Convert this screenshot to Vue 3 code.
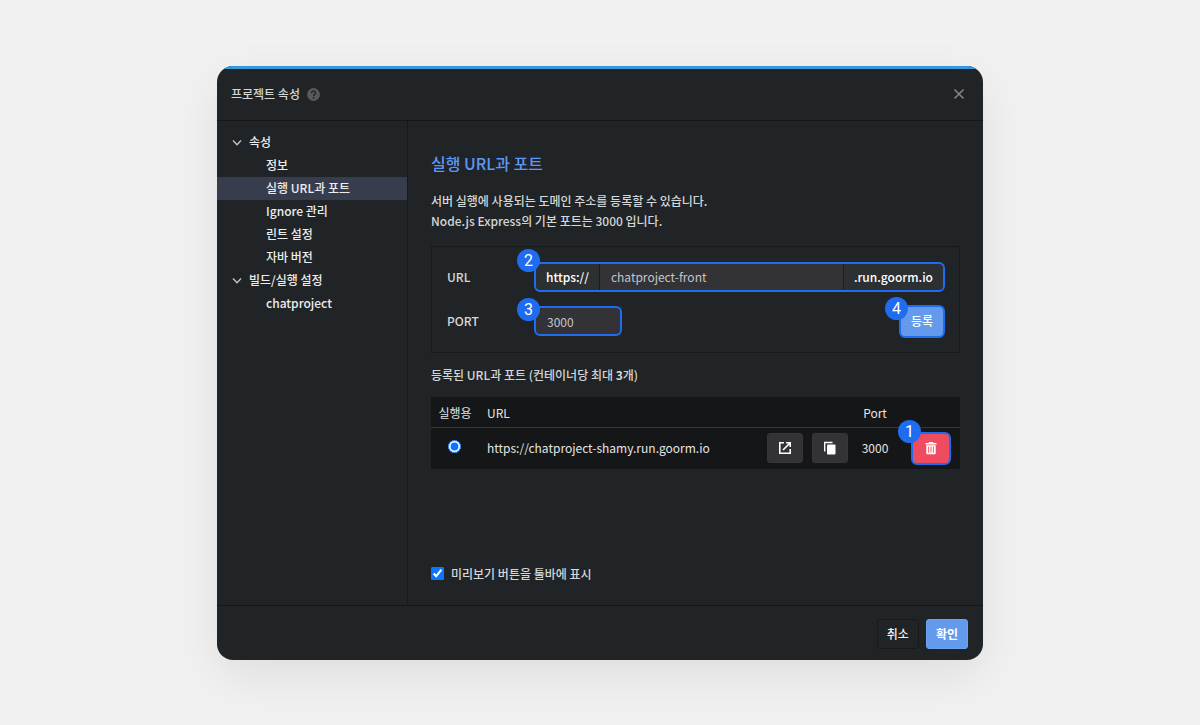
<script setup>
import { ref } from 'vue'

const groups = [
  { name: '속성', items: ['정보', '실행 URL과 포트', 'Ignore 관리', '린트 설정', '자바 버전'] },
  { name: '빌드/실행 설정', items: ['chatproject'] },
]
const selected = ref('실행 URL과 포트')
const host = ref('chatproject-front')
const port = ref('3000')
const showPreview = ref(true)
const runTarget = ref(0)
const entries = [{ url: 'https://chatproject-shamy.run.goorm.io', port: '3000' }]
</script>

<template>
  <main class="page">
    <section class="dialog" role="dialog" aria-labelledby="dialog-title">
      <header class="head">
        <h1 id="dialog-title">프로젝트 속성</h1>
        <button class="plain help" type="button" aria-label="도움말">
          <svg width="13" height="13" viewBox="0 0 13 13">
            <circle cx="6.500" cy="6.500" r="6.400" fill="#58595b" />
            <path d="M4.500 5.100C4.500 2.500 8.600 2.500 8.600 4.900C8.600 6.300 6.600 6.400 6.600 8" fill="none" stroke="#212426" stroke-width="1.400" />
            <rect x="5.850" y="9" width="1.500" height="1.500" fill="#212426" />
          </svg>
        </button>
        <button class="plain close" type="button" aria-label="닫기">
          <svg width="12" height="12" viewBox="0 0 12 12">
            <path d="M1.500 1.500L10.500 10.500M10.500 1.500L1.500 10.500" fill="none" stroke="#85888b" stroke-width="1.500" />
          </svg>
        </button>
      </header>

      <div class="body">
        <nav class="side">
          <div v-for="g in groups" :key="g.name">
            <button class="plain group" type="button" aria-expanded="true">
              <svg width="10" height="10" viewBox="0 0 10 10">
                <path d="M1 3.500L5 7.700L9 3.500" fill="none" stroke="#c6c8ca" stroke-width="1.300" />
              </svg>
              {{ g.name }}
            </button>
            <button
              v-for="i in g.items"
              :key="i"
              class="plain item"
              :class="{ active: i === selected }"
              type="button"
              @click="selected = i"
            >{{ i }}</button>
          </div>
        </nav>

        <div class="content">
          <h2>실행 URL과 포트</h2>
          <p class="intro">서버 실행에 사용되는 도메인 주소를 등록할 수 있습니다.<br />Node.js Express의 기본 포트는 3000 입니다.</p>

          <form class="panel" @submit.prevent>
            <div class="field">
              <label for="host">URL</label>
              <div class="marked grow">
                <span class="badge high">2</span>
                <div class="combo">
                  <span class="affix">https://</span>
                  <input id="host" v-model="host" type="text" />
                  <span class="affix">.run.goorm.io</span>
                </div>
              </div>
            </div>
            <div class="field">
              <label for="port">PORT</label>
              <div class="marked">
                <span class="badge">3</span>
                <input id="port" v-model="port" class="port" type="text" />
              </div>
              <div class="marked end">
                <span class="badge">4</span>
                <button class="btn primary ring" type="submit">등록</button>
              </div>
            </div>
          </form>

          <p class="caption">등록된 URL과 포트 (컨테이너당 최대 <b>3</b>개)</p>
          <table>
            <colgroup>
              <col class="c-run" /><col /><col class="c-act" /><col class="c-port" /><col class="c-del" />
            </colgroup>
            <thead>
              <tr>
                <th>실행용</th>
                <th class="left">URL</th>
                <th></th>
                <th>Port</th>
                <th></th>
              </tr>
            </thead>
            <tbody>
              <tr v-for="(e, n) in entries" :key="e.url">
                <td><input v-model="runTarget" class="radio" type="radio" name="run" :value="n" aria-label="실행용" /></td>
                <td class="left">{{ e.url }}</td>
                <td>
                  <div class="actions">
                    <button class="icon" type="button" aria-label="열기">
                      <svg width="14" height="14" viewBox="0 0 14 14" fill="none" stroke="#fff" stroke-width="1.600">
                        <path d="M6 1.800H1.800V12.200H12.200V8" />
                        <path d="M8 1.800H12.200V6M12 2L5 9" />
                      </svg>
                    </button>
                    <button class="icon" type="button" aria-label="복사">
                      <svg width="14" height="14" viewBox="0 0 14 14">
                        <path d="M1.700 10.500V1.500H9.500" fill="none" stroke="#fff" stroke-width="1.400" />
                        <rect x="4" y="3.500" width="8.500" height="10" rx="1" fill="#fff" />
                      </svg>
                    </button>
                  </div>
                </td>
                <td>{{ e.port }}</td>
                <td>
                  <div class="marked del">
                    <span class="badge">1</span>
                    <button class="icon danger ring" type="button" aria-label="삭제">
                      <svg width="14" height="14" viewBox="0 0 14 14" fill="#fff">
                        <path fill-rule="evenodd" d="M1.500 2H4.500L5.200 1H8.800L9.500 2H12.500V3.500H1.500ZM2.300 4.300H11.700V12.200Q11.700 13.300 10.600 13.300H3.400Q2.300 13.300 2.300 12.200ZM4.200 5.500V11.800H5.100V5.500ZM6.550 5.500V11.800H7.450V5.500ZM8.900 5.500V11.800H9.800V5.500Z" />
                      </svg>
                    </button>
                  </div>
                </td>
              </tr>
            </tbody>
          </table>

          <label class="preview">
            <input v-model="showPreview" type="checkbox" />
            미리보기 버튼을 툴바에 표시
          </label>
        </div>
      </div>

      <footer class="foot">
        <button class="btn" type="button">취소</button>
        <button class="btn primary strong" type="button">확인</button>
      </footer>
    </section>
  </main>
</template>

<style>
body {
  margin: 0;
  background: #f1f1f1;
}
</style>

<style scoped>
* {
  box-sizing: border-box;
}
.page {
  min-height: 100vh;
  padding: 32px 24px;
  display: flex;
  align-items: center;
  justify-content: center;
  font: 500 12px/20px "Noto Sans CJK KR", "Noto Sans", sans-serif;
  color: #d5d7d9;
}
.dialog {
  width: 100%;
  max-width: 766px;
  border-radius: 16px;
  overflow: hidden;
  background: #212426;
  box-shadow: 0 16px 48px rgba(0, 0, 0, 0.08);
}
.dialog::before {
  content: "";
  display: block;
  height: 3px;
  background: #3498db;
}
button,
input {
  font: inherit;
  color: inherit;
}
button {
  cursor: pointer;
}
h1,
h2,
p {
  margin: 0;
  font-size: 12px;
  font-weight: 500;
}
.plain {
  padding: 0;
  border: 0;
  background: none;
  display: flex;
  align-items: center;
}
.head {
  display: flex;
  align-items: center;
  gap: 7px;
  padding: 15px 18px 16px 14px;
  border-bottom: 1px solid #151718;
}
.help {
  padding-top: 2px;
}
.close {
  margin-left: auto;
}
.body {
  display: flex;
}
.side {
  flex: 0 0 191px;
  padding: 10px 0;
  border-right: 1px solid #17191a;
}
.group,
.item {
  width: 100%;
  height: 23px;
  color: #eceded;
}
.group {
  gap: 7px;
  padding-left: 15px;
}
.item {
  padding-left: 49px;
}
.item.active {
  background: #383d4d;
}
.content {
  flex: 1;
  min-width: 0;
  padding: 30px 23px 21px;
}
h2 {
  font-size: 16px;
  line-height: 24px;
  color: #5c97f7;
}
.intro {
  margin-top: 16px;
}
.panel {
  margin-top: 15px;
  padding: 15px 14px 14px 15px;
  border: 1px solid #171a1b;
}
.field {
  display: flex;
  align-items: center;
}
.field + .field {
  margin-top: 13px;
}
.field label {
  flex: 0 0 87px;
}
.marked {
  position: relative;
}
.grow {
  flex: 1;
  min-width: 0;
}
.end {
  margin-left: auto;
}
.badge {
  position: absolute;
  z-index: 1;
  left: -17px;
  top: -8px;
  width: 23px;
  height: 23px;
  border-radius: 50%;
  background: #1f6cf0;
  color: #fff;
  font: 400 16px/23px Roboto, sans-serif;
  text-align: center;
}
.badge.high {
  top: -13px;
}
.end .badge {
  left: -14px;
}
.del .badge {
  left: -4px;
  top: -12px;
}
.combo {
  display: flex;
  height: 30px;
  border: 2px solid #1f6cf0;
  border-radius: 6px;
  overflow: hidden;
  background: #2c3033;
}
.affix {
  padding: 0 10px;
  line-height: 26px;
  color: #fff;
}
.combo input {
  flex: 1;
  min-width: 0;
  padding: 0 11px;
  border: solid #1b1d1f;
  border-width: 0 1px;
  background: #323237;
  color: #c4c6c9;
  font-weight: 400;
}
.port {
  display: block;
  width: 88px;
  height: 30px;
  padding: 0 11px;
  border: 2px solid #1f6cf0;
  border-radius: 6px;
  background: #323237;
  color: #c4c6c9;
  font-weight: 400;
}
.btn {
  height: 30px;
  padding: 0 9px;
  border: 1px solid #17191a;
  border-radius: 3px;
  background: #212426;
  color: #f0f1f1;
  line-height: 28px;
}
.btn.primary {
  border-color: #6da2ee;
  background: #639aeb;
  color: #fff;
}
.btn.strong {
  font-weight: 700;
}
.btn.ring,
.icon.ring {
  height: 33px;
  border: 2px solid #1f6cf0;
  border-radius: 6px;
}
.btn.ring {
  display: block;
  padding: 0 10px;
}
.caption {
  margin-top: 12px;
}
table {
  width: 100%;
  margin-top: 12px;
  table-layout: fixed;
  border-collapse: collapse;
  background: #151617;
}
.c-run {
  width: 48px;
}
.c-act {
  width: 90px;
}
.c-port {
  width: 54px;
}
.c-del {
  width: 58px;
}
th,
td {
  padding: 0;
  font-weight: 400;
  text-align: center;
  color: #e4e5e6;
}
th {
  height: 31px;
  padding-top: 2px;
  border-bottom: 1px solid #35373a;
}
td {
  height: 41px;
}
.left {
  padding-left: 8px;
  text-align: left;
}
.actions {
  display: flex;
  justify-content: flex-end;
  gap: 9px;
}
.icon {
  display: flex;
  align-items: center;
  justify-content: center;
  width: 36px;
  height: 30px;
  padding: 0;
  border: 1px solid #35353b;
  border-radius: 3px;
  background: #323237;
}
.icon.danger {
  width: 40px;
  background: #ef4d5f;
}
.del {
  display: flex;
  justify-content: center;
}
.radio {
  display: block;
  width: 13px;
  height: 13px;
  margin: 0 auto 4px 17px;
  accent-color: #0b75ff;
}
.preview {
  display: flex;
  align-items: center;
  gap: 7px;
  margin-top: 95px;
}
.preview input {
  width: 13px;
  height: 13px;
  margin: 0;
  accent-color: #0b75ff;
}
.foot {
  display: flex;
  justify-content: flex-end;
  gap: 7px;
  padding: 13px 15px 11px;
  border-top: 1px solid #151718;
}
</style>
